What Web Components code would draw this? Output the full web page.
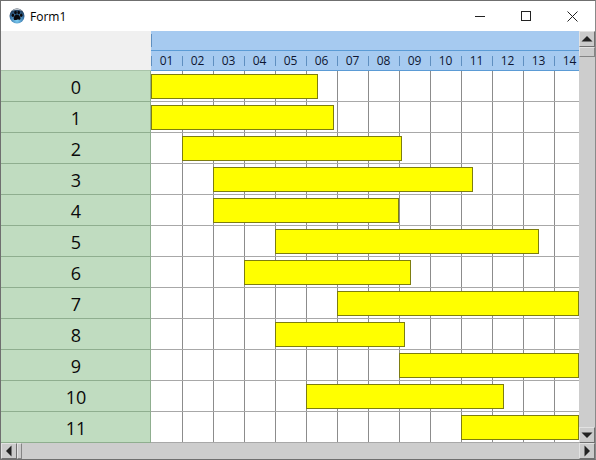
<!DOCTYPE html>
<html><head><meta charset="utf-8">
<style>
html,body{margin:0;padding:0;background:#fff;overflow:hidden}
body{font-family:"Open Sans","Noto Sans",sans-serif}
</style></head>
<body>
<form-window caption="Form1">
  <gantt-chart></gantt-chart>
</form-window>
<script>
class FormWindow extends HTMLElement{
  constructor(){super();const s=this.attachShadow({mode:'open'});
  s.innerHTML=`<style>
  :host{display:flex;flex-direction:column;width:596px;height:460px;box-sizing:border-box;background:#fff;border:1px solid #6f6f6f;border-right-color:#8a8a8a}
  .bar{height:30px;flex:none;display:flex;align-items:center;background:#fff}
  .ico{width:16px;height:16px;margin-left:8px;flex:none}
  .t{margin-left:5px;font:12px "Open Sans","Noto Sans",sans-serif;color:#000;flex:1}
  .b{width:46px;height:30px;display:flex;align-items:center;justify-content:center;flex:none}
  .body{flex:1;min-height:0}
  </style>
  <div class="bar">
   <svg class="ico" viewBox="0 0 16 16"><defs><radialGradient id="g" cx=".5" cy=".8" r=".8"><stop offset="0" stop-color="#7fd0f5"/><stop offset=".55" stop-color="#3d78ab"/><stop offset="1" stop-color="#12233a"/></radialGradient></defs><circle cx="8" cy="8" r="7.5" fill="url(#g)"/><path d="M2.6 3A7.5 7.5 0 0 1 13.4 3Q8 .8 2.6 3Z" fill="#e4e8ec" opacity=".8"/><g fill="#08080c"><ellipse cx="3.9" cy="7.2" rx="1.3" ry="1.7"/><ellipse cx="6.5" cy="4.6" rx="1.3" ry="1.9"/><ellipse cx="9.7" cy="4.6" rx="1.3" ry="1.9"/><ellipse cx="12.2" cy="7.2" rx="1.3" ry="1.7"/><path d="M8 6.6C5.8 6.6 4.4 9.4 4.7 10.9S7 12.2 8 11.7 11.2 12.3 11.5 10.9 10.2 6.6 8 6.6Z"/></g></svg>
   <span class="t">${this.getAttribute('caption')}</span>
   <div class="b"><svg width="10" height="10"><path d="M0 5.5H10" stroke="#222" shape-rendering="crispEdges"/></svg></div>
   <div class="b"><svg width="10" height="10"><rect x=".5" y=".5" width="9" height="9" fill="none" stroke="#222" shape-rendering="crispEdges"/></svg></div>
   <div class="b"><svg width="11" height="11"><path d="M.5 .5L10.5 10.5M10.5 .5L.5 10.5" stroke="#222"/></svg></div>
  </div>
  <div class="body"><slot></slot></div>`;}
}
customElements.define('form-window',FormWindow);

class ScrollBar extends HTMLElement{
  constructor(){super();const s=this.attachShadow({mode:'open'});
  const v=this.getAttribute('axis')==='v';
  const arrow=(d)=>`<svg width="12" height="12" viewBox="0 0 12 12"><path d="${d}" fill="#222"/></svg>`;
  s.innerHTML=`<style>
  :host{display:flex;flex-direction:${v?'column':'row'};background:#cdcdcd;box-sizing:border-box;${v?'width:16px':'height:16px'}}
  .btn{width:16px;height:16px;flex:none;box-sizing:border-box;display:flex;align-items:center;justify-content:center;background:#cbcbcb;border:1px solid;border-color:#e2e2e2 #707070 #707070 #e2e2e2}
  .thumb{${v?'height:10px;width:16px':'width:5px;height:16px'};flex:none;box-sizing:border-box;background:#cbcbcb;border:1px solid;border-color:#e2e2e2 #858585 #858585 #e2e2e2}
  .track{flex:1}
  </style>
  <div class="btn">${arrow(v?'M.5 8.5L6 3L11.5 8.5Z':'M8.5 .5L3 6L8.5 11.5Z')}</div>
  <div class="thumb"></div><div class="track"></div>
  <div class="btn">${arrow(v?'M.5 3.5L6 9L11.5 3.5Z':'M3.5 .5L9 6L3.5 11.5Z')}</div>`;}
}
customElements.define('scroll-bar',ScrollBar);

class GanttRow extends HTMLElement{
  constructor(){super();const s=this.attachShadow({mode:'open'});
  const left=+this.getAttribute('left'),w=+this.getAttribute('span');
  let cells='';for(let i=0;i<14;i++)cells+='<i></i>';
  s.innerHTML=`<style>
  :host{display:flex;height:31px;box-sizing:border-box}
  .label{width:150px;flex:none;box-sizing:border-box;background:#c0dcc0;border-bottom:1px solid #8fae8f;border-right:1px solid #8fae8f;display:flex;align-items:center;justify-content:center;font:18px "Open Sans","Noto Sans",sans-serif;color:#0a0a0a;padding:1px 0 0 1px}
  .cells{flex:1;min-width:0;display:flex;position:relative;overflow:hidden;border-bottom:1px solid #a8a8a8;box-sizing:border-box}
  i{display:block;width:31px;flex:none;box-sizing:border-box;border-left:1px solid #8c8c8c}
  i:first-child{border-left-color:transparent}
  .g{display:block;position:absolute;top:3px;height:25px;left:${left}px;width:${w}px;box-sizing:border-box;background:#ff0;border:1px solid #7d7d10}
  </style><div class="label"><slot></slot></div><div class="cells">${cells}<div class="g"></div></div>`;}
}
customElements.define('gantt-row',GanttRow);

class GanttChart extends HTMLElement{
  constructor(){super();const s=this.attachShadow({mode:'open'});
  const bars=[[0,167],[0,183],[31,220],[62,260],[62,186],[124,264],[93,167],[186,242],[124,130],[248,180],[155,198],[310,118]];
  let hd='';for(let i=1;i<=14;i++)hd+=`<span>${String(i).padStart(2,'0')}</span>`;
  const rows=bars.map((b,i)=>`<gantt-row left="${b[0]}" span="${b[1]}">${i}</gantt-row>`).join('');
  s.innerHTML=`<style>
  :host{display:flex;flex-direction:column;height:428px;box-sizing:border-box}
  .main{display:flex;flex:1;min-height:0}
  .content{width:578px;flex:none;display:flex;flex-direction:column;overflow:hidden}
  .head{display:flex;height:40px;flex:none}
  .corner{width:150px;flex:none;background:#f0f0f0;border-bottom:1px solid #a9c4a9;box-sizing:border-box}
  .scale{flex:1;display:flex;flex-direction:column;background:#a6caf0;min-width:0}
  .top{height:20px;flex:none;box-sizing:border-box;border-bottom:1px solid #5b9bd5;position:relative}
  .top::after{content:"";position:absolute;left:0;top:3px;height:13px;width:1px;background:#5f8fc0}
  .ticks{height:20px;flex:none;box-sizing:border-box;display:flex;border-bottom:1px solid #5b9bd5;overflow:hidden}
  span{width:31px;flex:none;box-sizing:border-box;text-align:center;font:12px/19px "Open Sans","Noto Sans",sans-serif;color:#0e1630;position:relative}
  span::after{content:"";position:absolute;left:0;top:5px;height:10px;width:1px;background:#5f8fc0}
  .rows{flex:1;min-height:0;overflow:hidden}
  scroll-bar[axis=h]{flex:none}
  </style>
  <div class="main"><div class="content">
    <div class="head"><div class="corner"></div><div class="scale"><div class="top"></div><div class="ticks">${hd}</div></div></div>
    <div class="rows">${rows}</div>
  </div><scroll-bar axis="v"></scroll-bar></div>
  <scroll-bar axis="h"></scroll-bar>`;}
}
customElements.define('gantt-chart',GanttChart);
</script>
</body></html>
